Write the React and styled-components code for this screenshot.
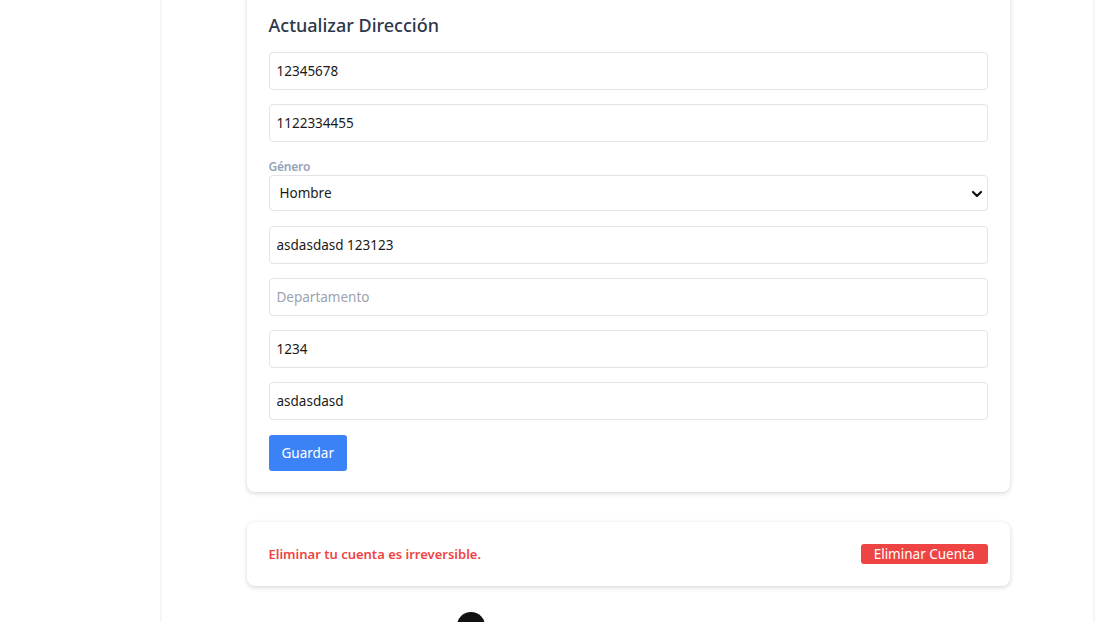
import React from 'react';
import styled, { createGlobalStyle } from 'styled-components';

const Global = createGlobalStyle`
  html, body {
    margin: 0;
    padding: 0;
    background: #ffffff;
    font-family: "Noto Sans", "Open Sans", sans-serif;
    overflow: hidden;
  }
  * { box-sizing: border-box; }
`;

const Page = styled.div`
  width: 1098px;
  height: 622px;
  display: flex;
  padding-left: 160px;
  padding-right: 3px;
  overflow: hidden;
`;

const Column = styled.div`
  flex: 1;
  border-left: 2px solid #f6f6f7;
  border-right: 2px solid #f6f6f7;
  display: flex;
  flex-direction: column;
  align-items: center;
  gap: 30px;
  padding-left: 1px;
`;

const Card = styled.div`
  width: 763px;
  background: #fff;
  border-radius: 8px;
  box-shadow: 0 1px 4px rgba(0, 0, 0, 0.12), 0 2px 6px rgba(0, 0, 0, 0.06);
  padding: ${p => p.$pad || '22px'};
  margin-top: ${p => p.$mt || '0'};
`;

const Title = styled.h2`
  margin: 0 0 15px;
  font-size: 18px;
  font-weight: 500;
  color: #2d3748;
  line-height: 24px;
`;

const Form = styled.form`
  display: flex;
  flex-direction: column;
  gap: 14px;
`;

const Input = styled.input`
  width: 100%;
  height: 38px;
  border: 1px solid #e2e4e8;
  border-radius: 4px;
  padding: 0 7px;
  font-family: inherit;
  font-size: 13.5px;
  color: #1a1a1a;
  background: #fff;
  outline: none;
  &::placeholder { color: #9ca3af; }
`;

const Field = styled.div`
  display: flex;
  flex-direction: column;
  gap: 1px;
  margin-top: 3px;
`;

const Label = styled.label`
  font-size: 12px;
  font-weight: 600;
  color: #94a3b8;
  line-height: 15px;
  letter-spacing: -0.2px;
`;

const SelectBox = styled.div`
  position: relative;
  height: 36px;
  border: 1px solid #e2e4e8;
  border-radius: 4px;
  display: flex;
  align-items: center;
  padding: 0 10px;
  font-size: 13.5px;
  color: #1a1a1a;
  margin-bottom: 1px;
`;

const Chevron = styled.svg`
  position: absolute;
  right: 4px;
  top: 13px;
`;

const Actions = styled.div`
  padding-top: 1px;
`;

const Button = styled.button`
  border: none;
  border-radius: 3px;
  background: ${p => p.$bg};
  color: #fff;
  font-family: inherit;
  font-size: ${p => p.$fs || '14px'};
  height: ${p => p.$h || '36px'};
  padding: ${p => p.$px || '0 14px'};
  cursor: pointer;
`;

const DangerRow = styled.div`
  display: flex;
  align-items: center;
  justify-content: space-between;
  height: 20px;
`;

const DangerText = styled.span`
  color: #ef4444;
  font-size: 13px;
  font-weight: 600;
`;

const Dot = styled.div`
  width: 28px;
  height: 28px;
  border-radius: 50%;
  background: #111;
  align-self: flex-start;
  margin-left: 294px;
  margin-top: -4px;
  flex-shrink: 0;
`;

export default function App() {
  return (
    <Page>
      <Global />
      <Column>
        <Card $pad="34px 22px 21px" $mt="-21px">
          <Title>Actualizar Dirección</Title>
          <Form onSubmit={e => e.preventDefault()}>
            <Input defaultValue="12345678" />
            <Input defaultValue="1122334455" />
            <Field>
              <Label>Género</Label>
              <SelectBox>
                Hombre
                <Chevron width="12" height="10" viewBox="0 0 12 10">
                  <path d="M2 3l4 4 4-4" fill="none" stroke="#111" strokeWidth="2.2" strokeLinecap="round" strokeLinejoin="round" />
                </Chevron>
              </SelectBox>
            </Field>
            <Input defaultValue="asdasdasd 123123" />
            <Input placeholder="Departamento" />
            <Input defaultValue="1234" />
            <Input defaultValue="asdasdasd" />
            <Actions>
              <Button type="button" $bg="#3b82f6" $px="0 13px" $fs="13.5px">Guardar</Button>
            </Actions>
          </Form>
        </Card>
        <Card $pad="22px">
          <DangerRow>
            <DangerText>Eliminar tu cuenta es irreversible.</DangerText>
            <Button type="button" $bg="#ef4444" $h="20px" $px="0 13px" $fs="13.5px">Eliminar Cuenta</Button>
          </DangerRow>
        </Card>
        <Dot />
      </Column>
    </Page>
  );
}
